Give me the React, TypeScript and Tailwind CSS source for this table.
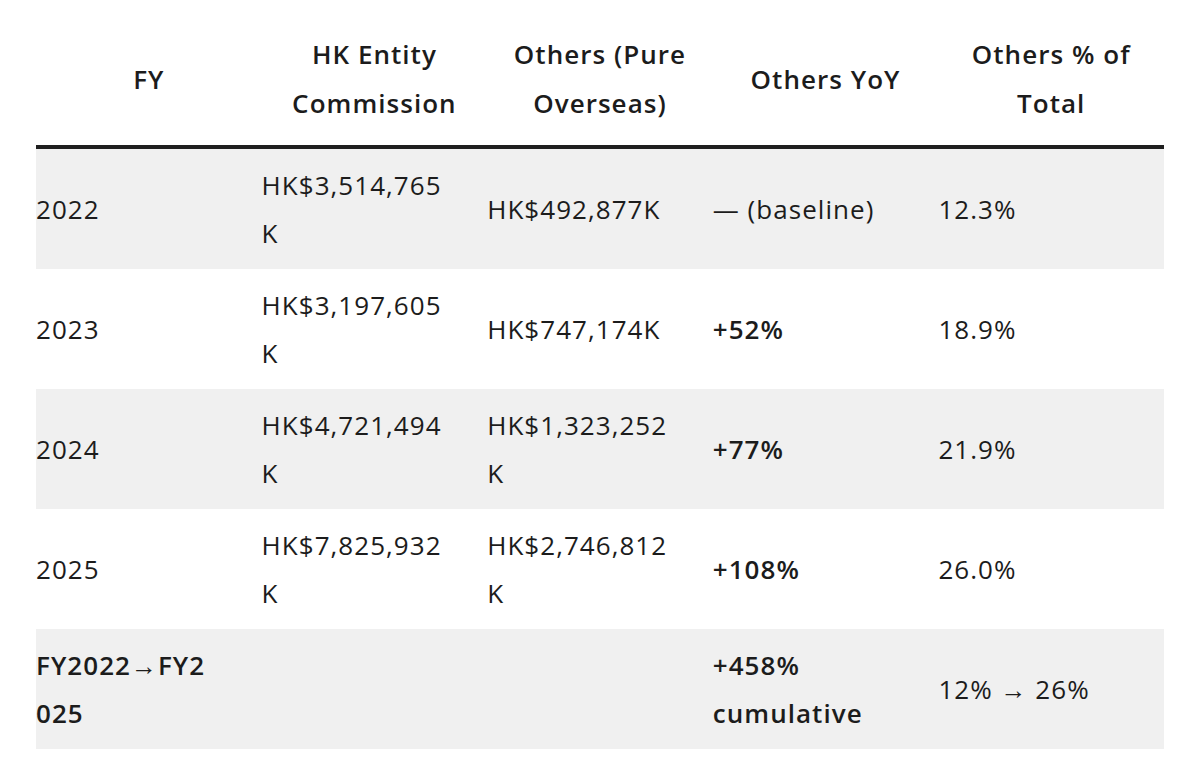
import React from "react";

type Row = {
  fy: React.ReactNode;
  hk: React.ReactNode;
  others: React.ReactNode;
  yoy: React.ReactNode;
  pct: React.ReactNode;
  gray: boolean;
};

const rows: Row[] = [
  {
    fy: "2022",
    hk: (
      <>
        HK$3,514,765
        <br />K
      </>
    ),
    others: "HK$492,877K",
    yoy: "— (baseline)",
    pct: "12.3%",
    gray: true,
  },
  {
    fy: "2023",
    hk: (
      <>
        HK$3,197,605
        <br />K
      </>
    ),
    others: "HK$747,174K",
    yoy: <strong className="font-semibold">+52%</strong>,
    pct: "18.9%",
    gray: false,
  },
  {
    fy: "2024",
    hk: (
      <>
        HK$4,721,494
        <br />K
      </>
    ),
    others: (
      <>
        HK$1,323,252
        <br />K
      </>
    ),
    yoy: <strong className="font-semibold">+77%</strong>,
    pct: "21.9%",
    gray: true,
  },
  {
    fy: "2025",
    hk: (
      <>
        HK$7,825,932
        <br />K
      </>
    ),
    others: (
      <>
        HK$2,746,812
        <br />K
      </>
    ),
    yoy: <strong className="font-semibold">+108%</strong>,
    pct: "26.0%",
    gray: false,
  },
  {
    fy: (
      <strong className="font-semibold">
        FY2022→FY2
        <br />
        025
      </strong>
    ),
    hk: "",
    others: "",
    yoy: (
      <strong className="font-semibold">
        +458%
        <br />
        cumulative
      </strong>
    ),
    pct: "12% → 26%",
    gray: true,
  },
];

const headers: React.ReactNode[] = [
  "FY",
  <>
    HK Entity
    <br />
    Commission
  </>,
  <>
    Others (Pure
    <br />
    Overseas)
  </>,
  "Others YoY",
  <>
    Others % of
    <br />
    Total
  </>,
];

export default function App() {
  return (
    <div
      className="w-[1199px] h-[784px] bg-white text-[#1c1c1c] pt-[13px] pl-[36px] overflow-hidden"
      style={{ fontFamily: '"Open Sans", "Noto Sans", sans-serif' }}
    >
      <table className="w-[1128px] table-fixed border-collapse text-[26px] leading-[48px] tracking-[0.04em]">
        <thead>
          <tr className="border-b-[4px] border-[#1f1f1f]">
            {headers.map((h, i) => (
              <th
                key={i}
                className="px-0 pt-[17px] pb-[17px] text-center align-middle font-semibold leading-[49px]"
              >
                {h}
              </th>
            ))}
          </tr>
        </thead>
        <tbody>
          {rows.map((r, i) => (
            <tr key={i} className={r.gray ? "bg-[#f0f0f0]" : "bg-white"}>
              {[r.fy, r.hk, r.others, r.yoy, r.pct].map((c, j) => (
                <td
                  key={j}
                  className="h-[120px] px-0 py-[12px] text-left align-middle font-normal"
                >
                  {c}
                </td>
              ))}
            </tr>
          ))}
        </tbody>
      </table>
    </div>
  );
}
